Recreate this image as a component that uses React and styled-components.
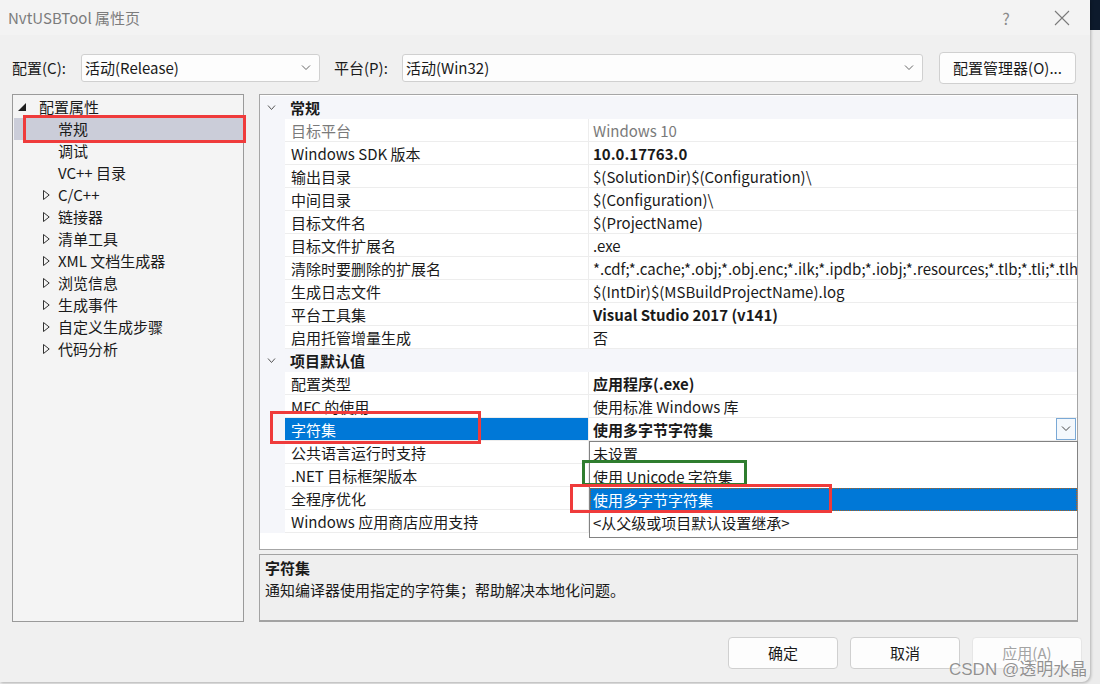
import styled, { createGlobalStyle } from "styled-components";

const FONT = `"Noto Sans CJK SC", "Noto Sans", sans-serif`;

const GlobalStyle = createGlobalStyle`
  html, body {
    margin: 0;
    padding: 0;
    background: linear-gradient(#0d1a2c 0 30px, #ececec 30px);
  }
  body {
    width: 1100px;
    height: 684px;
    overflow: hidden;
    font-family: ${FONT};
  }
`;

const Dialog = styled.div`
  position: relative;
  width: 1090px;
  height: 682px;
  background: #f0f0f0;
  border-bottom-right-radius: 8px;
  box-shadow: 1px 1px 3px rgba(0, 0, 0, 0.25);
  display: flex;
  flex-direction: column;
  font-size: 15px;
  color: #1a1a1a;
`;

const TitleBar = styled.div`
  height: 35px;
  flex: none;
  display: flex;
  align-items: center;
  padding-left: 8px;
  background: #f3f3f3;
  color: #7c7c7c;
  font-size: 15px;
`;

const Title = styled.div`
  flex: 1;
`;

const TitleButton = styled.div`
  width: 56px;
  height: 35px;
  display: flex;
  align-items: center;
  justify-content: center;
  color: #8a8a8a;
  font-size: 16px;
`;

const Content = styled.div`
  flex: 1;
  display: flex;
  flex-direction: column;
  padding: 0 12px;
`;

const ConfigRow = styled.div`
  margin-top: 17px;
  height: 31px;
  display: flex;
  align-items: center;
`;

const FieldLabel = styled.div`
  width: ${(p) => p.$w}px;
  margin-left: ${(p) => p.$ml || 0}px;
  line-height: 20px;
`;

const Combo = styled.div`
  width: ${(p) => p.$w}px;
  height: 28px;
  box-sizing: border-box;
  background: #fdfdfd;
  border: 1px solid #d0d0d0;
  border-radius: 3px;
  display: flex;
  align-items: center;
  padding: 0 8px 0 3px;
  line-height: 20px;
  span {
    flex: 1;
  }
`;

const Button = styled.div`
  width: ${(p) => p.$w}px;
  height: 32px;
  box-sizing: border-box;
  margin-left: ${(p) => p.$ml || 0}px;
  background: #fdfdfd;
  border: 1px solid ${(p) => (p.$disabled ? "#e6e6e6" : "#d0d0d0")};
  border-radius: 4px;
  display: flex;
  align-items: center;
  justify-content: center;
  color: ${(p) => (p.$disabled ? "#a3a3a3" : "#1a1a1a")};
  line-height: 20px;
`;

const Main = styled.div`
  margin-top: 11px;
  height: 528px;
  display: flex;
  gap: 15px;
`;

const TreePanel = styled.div`
  width: 232px;
  box-sizing: border-box;
  border: 1px solid #9a9a9a;
  background: #f4f4f4;
  padding-top: 1px;
`;

const TreeRow = styled.div`
  height: 22px;
  margin-left: 1px;
  display: flex;
  align-items: center;
  padding-left: ${(p) => p.$indent}px;
  background: ${(p) => (p.$selected ? "#cbcdd9" : "transparent")};
  line-height: 22px;
`;

const Expander = styled.div`
  width: ${(p) => p.$w}px;
  display: flex;
  align-items: center;
`;

const RightCol = styled.div`
  width: 819px;
  display: flex;
  flex-direction: column;
  gap: 4px;
`;

const Grid = styled.div`
  position: relative;
  height: 456px;
  box-sizing: border-box;
  border: 1px solid #a6a6a6;
  background: #ffffff;
  padding-top: 1px;
`;

const CategoryRow = styled.div`
  height: 23px;
  display: flex;
  align-items: center;
  background: #f5f6fa;
  font-weight: 700;
  line-height: 22px;
`;

const Chevron = styled.div`
  width: 23px;
  padding-left: 7px;
  display: flex;
  align-items: center;
`;

const PropRow = styled.div`
  height: 23px;
  display: flex;
  line-height: 21px;
`;

const Gutter = styled.div`
  width: 25px;
  flex: none;
  background: #f5f6fa;
`;

const LabelCell = styled.div`
  width: 297px;
  flex: none;
  height: 22px;
  border-bottom: 1px solid #ededed;
  border-right: 1px solid #ededed;
  padding-left: 6px;
  display: flex;
  align-items: center;
  white-space: nowrap;
  background: ${(p) => (p.$selected ? "#0078d7" : "transparent")};
  color: ${(p) => (p.$selected ? "#ffffff" : p.$dim ? "#7a7a7a" : "#1a1a1a")};
`;

const ValueCell = styled.div`
  flex: 1;
  min-width: 0;
  height: 22px;
  border-bottom: 1px solid #ededed;
  padding-left: 4px;
  display: flex;
  align-items: center;
  overflow: hidden;
  white-space: nowrap;
  font-weight: ${(p) => (p.$bold ? 700 : 400)};
  color: ${(p) => (p.$dim ? "#7a7a7a" : "#1a1a1a")};
  span {
    flex: 1;
  }
`;

const DropButton = styled.div`
  width: 20px;
  height: 22px;
  box-sizing: border-box;
  margin-right: 1px;
  border: 1px solid #7aa9d6;
  background: #f4f8fc;
  display: flex;
  align-items: center;
  justify-content: center;
`;

const DropList = styled.div`
  position: absolute;
  left: 329px;
  top: 346px;
  width: 489px;
  height: 97px;
  box-sizing: border-box;
  border: 1px solid #828282;
  background: #ffffff;
`;

const DropItem = styled.div`
  height: 23px;
  display: flex;
  align-items: center;
  padding-left: 3px;
  background: ${(p) => (p.$active ? "#0078d7" : "transparent")};
  color: ${(p) => (p.$active ? "#ffffff" : "#1a1a1a")};
  outline: ${(p) => (p.$active ? "1px dotted #b0601a" : "none")};
  outline-offset: -1px;
`;

const DescPanel = styled.div`
  height: 68px;
  box-sizing: border-box;
  border: 1px solid #a3a3a3;
  border-bottom-width: 2px;
  background: #efefef;
  padding: 2px 5px;
`;

const DescTitle = styled.div`
  font-weight: 700;
  line-height: 21px;
`;

const DescText = styled.div`
  line-height: 24px;
`;

const Footer = styled.div`
  margin-top: 15px;
  display: flex;
  justify-content: flex-end;
  gap: 12px;
  padding-right: 8px;
  margin-right: -12px;
`;

const Mark = styled.div`
  position: absolute;
  left: ${(p) => p.$x}px;
  top: ${(p) => p.$y}px;
  width: ${(p) => p.$w}px;
  height: ${(p) => p.$h}px;
  box-sizing: border-box;
  border: 3px solid ${(p) => p.$color};
  pointer-events: none;
`;

const Watermark = styled.div`
  position: absolute;
  left: 949px;
  top: 655px;
  font-family: "Liberation Sans", "Noto Sans CJK SC", sans-serif;
  font-size: 17px;
  color: rgba(110, 110, 110, 0.75);
  text-shadow: 0 0 1px #fff;
  white-space: nowrap;
`;

const SmallChevron = ({ color = "#666", w = 10 }) => (
  <svg width={w} height="6" viewBox={`0 0 ${w} 6`}>
    <polyline points={`1,0.5 ${w / 2},4.5 ${w - 1},0.5`} fill="none" stroke={color} strokeWidth="1" />
  </svg>
);

const Expanded = () => (
  <svg width="8" height="8" viewBox="0 0 8 8">
    <polygon points="8,0 8,8 0,8" fill="#1e1e1e" />
  </svg>
);

const Collapsed = () => (
  <svg width="7" height="10" viewBox="0 0 7 10">
    <polygon points="0.5,0.5 6.2,5 0.5,9.5" fill="none" stroke="#333" strokeWidth="1" />
  </svg>
);

const treeItems = [
  { label: "常规", selected: true },
  { label: "调试" },
  { label: "VC++ 目录" },
  { label: "C/C++", sub: true },
  { label: "链接器", sub: true },
  { label: "清单工具", sub: true },
  { label: "XML 文档生成器", sub: true },
  { label: "浏览信息", sub: true },
  { label: "生成事件", sub: true },
  { label: "自定义生成步骤", sub: true },
  { label: "代码分析", sub: true },
];

const general = [
  { k: "目标平台", v: "Windows 10", dim: true },
  { k: "Windows SDK 版本", v: "10.0.17763.0", bold: true },
  { k: "输出目录", v: "$(SolutionDir)$(Configuration)\\" },
  { k: "中间目录", v: "$(Configuration)\\" },
  { k: "目标文件名", v: "$(ProjectName)" },
  { k: "目标文件扩展名", v: ".exe" },
  {
    k: "清除时要删除的扩展名",
    v: "*.cdf;*.cache;*.obj;*.obj.enc;*.ilk;*.ipdb;*.iobj;*.resources;*.tlb;*.tli;*.tlh;*.tmp;*.rsp",
  },
  { k: "生成日志文件", v: "$(IntDir)$(MSBuildProjectName).log" },
  { k: "平台工具集", v: "Visual Studio 2017 (v141)", bold: true },
  { k: "启用托管增量生成", v: "否" },
];

const defaults = [
  { k: "配置类型", v: "应用程序(.exe)", bold: true },
  { k: "MFC 的使用", v: "使用标准 Windows 库" },
  { k: "字符集", v: "使用多字节字符集", bold: true, selected: true },
  { k: "公共语言运行时支持", v: "" },
  { k: ".NET 目标框架版本", v: "" },
  { k: "全程序优化", v: "" },
  { k: "Windows 应用商店应用支持", v: "" },
];

const Props = ({ rows }) =>
  rows.map((r) => (
    <PropRow key={r.k}>
      <Gutter />
      <LabelCell $selected={r.selected} $dim={r.dim}>
        {r.k}
      </LabelCell>
      <ValueCell $bold={r.bold} $dim={r.dim}>
        <span>{r.v}</span>
        {r.selected && (
          <DropButton>
            <SmallChevron color="#444" />
          </DropButton>
        )}
      </ValueCell>
    </PropRow>
  ));

const App = () => {
  return (
    <>
      <GlobalStyle />
      <Dialog>
        <TitleBar>
          <Title>NvtUSBTool 属性页</Title>
          <TitleButton>?</TitleButton>
          <TitleButton>
            <svg width="16" height="16" viewBox="0 0 16 16">
              <path d="M1 1 L15 15 M15 1 L1 15" stroke="#7a7a7a" strokeWidth="1.1" />
            </svg>
          </TitleButton>
        </TitleBar>
        <Content>
          <ConfigRow>
            <FieldLabel $w={69}>配置(C):</FieldLabel>
            <Combo $w={239}>
              <span>活动(Release)</span>
              <SmallChevron />
            </Combo>
            <FieldLabel $w={68} $ml={14}>
              平台(P):
            </FieldLabel>
            <Combo $w={521}>
              <span>活动(Win32)</span>
              <SmallChevron />
            </Combo>
            <Button $w={137} $ml={16}>
              配置管理器(O)...
            </Button>
          </ConfigRow>

          <Main>
            <TreePanel>
              <TreeRow $indent={4}>
                <Expander $w={21}>
                  <Expanded />
                </Expander>
                配置属性
              </TreeRow>
              {treeItems.map((t) => (
                <TreeRow key={t.label} $indent={29} $selected={t.selected}>
                  <Expander $w={15}>{t.sub && <Collapsed />}</Expander>
                  {t.label}
                </TreeRow>
              ))}
            </TreePanel>

            <RightCol>
              <Grid>
                <CategoryRow>
                  <Chevron>
                    <SmallChevron color="#555" w={9} />
                  </Chevron>
                  常规
                </CategoryRow>
                <Props rows={general} />
                <CategoryRow>
                  <Chevron>
                    <SmallChevron color="#555" w={9} />
                  </Chevron>
                  项目默认值
                </CategoryRow>
                <Props rows={defaults} />
                <DropList>
                  <DropItem>未设置</DropItem>
                  <DropItem>使用 Unicode 字符集</DropItem>
                  <DropItem $active>使用多字节字符集</DropItem>
                  <DropItem>&lt;从父级或项目默认设置继承&gt;</DropItem>
                </DropList>
              </Grid>
              <DescPanel>
                <DescTitle>字符集</DescTitle>
                <DescText>通知编译器使用指定的字符集；帮助解决本地化问题。</DescText>
              </DescPanel>
            </RightCol>
          </Main>

          <Footer>
            <Button $w={110}>确定</Button>
            <Button $w={110}>取消</Button>
            <Button $w={110} $disabled>
              应用(A)
            </Button>
          </Footer>
        </Content>

        <Mark $x={23} $y={115} $w={223} $h={28} $color="#ef3b3b" />
        <Mark $x={270} $y={411} $w={211} $h={33} $color="#ef3b3b" />
        <Mark $x={582} $y={460} $w={165} $h={26} $color="#2f7d2f" />
        <Mark $x={570} $y={484} $w={262} $h={29} $color="#ef3b3b" />
        <Watermark>CSDN @透明水晶</Watermark>
      </Dialog>
    </>
  );
};

export default App;
